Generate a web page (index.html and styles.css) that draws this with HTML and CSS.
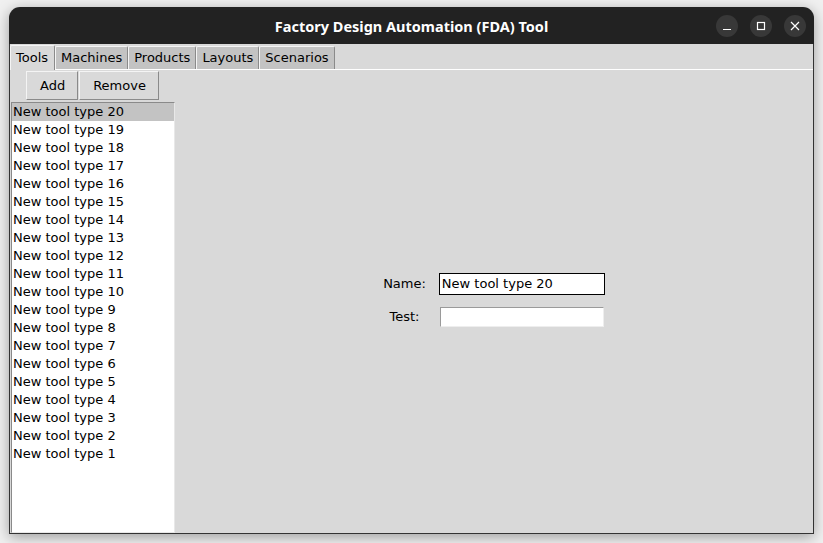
FILE: index.html
```html
<!DOCTYPE html>
<html>
<head>
<meta charset="utf-8">
<link rel="stylesheet" href="styles.css">
</head>
<body>
<div class="window">
  <div class="titlebar">
    <div class="title">Factory Design Automation (FDA) Tool</div>
    <div class="controls">
      <span class="ctl"><svg width="10" height="10" viewBox="0 0 10 10"><line x1="1" y1="8.5" x2="9" y2="8.5" stroke="#fff" stroke-width="1.2"/></svg></span>
      <span class="ctl"><svg width="10" height="10" viewBox="0 0 10 10"><rect x="1.5" y="1.5" width="7" height="7" fill="none" stroke="#fff" stroke-width="1.2"/></svg></span>
      <span class="ctl"><svg width="10" height="10" viewBox="0 0 10 10"><path d="M1 1L9 9M9 1L1 9" stroke="#fff" stroke-width="1.2"/></svg></span>
    </div>
  </div>
  <div class="content">
    <div class="tabs">
      <div class="tab active">Tools</div>
      <div class="tab">Machines</div>
      <div class="tab">Products</div>
      <div class="tab">Layouts</div>
      <div class="tab">Scenarios</div>
    </div>
    <div class="page">
      <div class="left">
        <div class="buttons">
          <button class="btn">Add</button>
          <button class="btn">Remove</button>
        </div>
        <div class="list">
          <div class="row selected">New tool type 20</div>
          <div class="row">New tool type 19</div>
          <div class="row">New tool type 18</div>
          <div class="row">New tool type 17</div>
          <div class="row">New tool type 16</div>
          <div class="row">New tool type 15</div>
          <div class="row">New tool type 14</div>
          <div class="row">New tool type 13</div>
          <div class="row">New tool type 12</div>
          <div class="row">New tool type 11</div>
          <div class="row">New tool type 10</div>
          <div class="row">New tool type 9</div>
          <div class="row">New tool type 8</div>
          <div class="row">New tool type 7</div>
          <div class="row">New tool type 6</div>
          <div class="row">New tool type 5</div>
          <div class="row">New tool type 4</div>
          <div class="row">New tool type 3</div>
          <div class="row">New tool type 2</div>
          <div class="row">New tool type 1</div>
        </div>
      </div>
      <div class="detail">
        <div class="form">
          <label class="lbl">Name:</label>
          <div class="entry focus"><span class="entry-inner">New tool type 20</span></div>
          <label class="lbl">Test:</label>
          <div class="entry"><span class="entry-inner"></span></div>
        </div>
      </div>
    </div>
  </div>
</div>
</body>
</html>
```
FILE: styles.css
```css
* { box-sizing: border-box; }
html, body { margin: 0; padding: 0; }
body {
  width: 823px;
  height: 543px;
  background: #f0f0f0;
  overflow: hidden;
  font-family: "DejaVu Sans", sans-serif;
}
.window {
  margin: 7px 0 0 9px;
  width: 805px;
  height: 527px;
  border-radius: 11px 11px 0 0;
  box-shadow: 0 3px 14px rgba(0,0,0,0.35);
  display: flex;
  flex-direction: column;
  overflow: hidden;
  background: #d9d9d9;
}
.titlebar {
  height: 37px;
  background: #222222;
  position: relative;
  display: flex;
  align-items: center;
  justify-content: center;
  flex: none;
}
.title {
  color: #ffffff;
  font-family: "Noto Sans", "DejaVu Sans", sans-serif;
  font-weight: 700;
  font-size: 14.5px;
  padding-top: 1px;
}
.controls {
  position: absolute;
  right: 8px;
  top: 8px;
  display: flex;
  gap: 12px;
}
.ctl {
  width: 22px;
  height: 22px;
  border-radius: 50%;
  background: #383838;
  display: flex;
  align-items: center;
  justify-content: center;
}
.content {
  flex: 1;
  display: flex;
  flex-direction: column;
  border: 1px solid #333333;
  border-top: none;
  min-height: 0;
}
.tabs {
  display: flex;
  align-items: flex-end;
  height: 25px;
  flex: none;
  font-size: 13px;
  color: #000;
}
.tab {
  height: 23px;
  padding: 0 5px 0 5px;
  line-height: 21px;
  background: #c3c3c3;
  border-top: 1px solid #f4f4f4;
  border-left: 1px solid #f4f4f4;
  border-right: 1px solid #8a8a8a;
  border-radius: 2px 2px 0 0;
}
.tab.active {
  height: 25px;
  padding: 0 6px 0 5px;
  background: #d9d9d9;
  line-height: 23px;
  margin-bottom: -1px;
  position: relative;
  z-index: 1;
}
.page {
  flex: 1;
  display: flex;
  border-top: 1px solid #ffffff;
  min-height: 0;
}
.left {
  width: 165px;
  display: flex;
  flex-direction: column;
  padding: 1px 0 0 1px;
}
.buttons {
  display: flex;
  gap: 1px;
  height: 31px;
  padding-left: 15px;
}
.btn {
  font-family: "DejaVu Sans", sans-serif;
  font-size: 13px;
  color: #000;
  background: #d9d9d9;
  border: 1px solid;
  border-color: #f4f4f4 #8a8a8a #8a8a8a #f4f4f4;
  height: 29px;
  padding: 0 12px 0 13px;
  margin: 0;
}
.list {
  flex: 1;
  background: #ffffff;
  border: 1px solid;
  border-color: #8a8a8a #e8e8e8 #e8e8e8 #8a8a8a;
  font-size: 13px;
  color: #000;
}
.row {
  height: 18px;
  line-height: 18px;
  padding-left: 1px;
  white-space: nowrap;
}
.row.selected { background: #c3c3c3; }
.detail {
  flex: 1;
  display: flex;
  align-items: center;
  justify-content: center;
  padding-bottom: 3px;
  padding-right: 4px;
}
.form {
  display: grid;
  grid-template-columns: auto 166px;
  column-gap: 9px;
  row-gap: 11px;
  align-items: center;
  font-size: 13px;
  color: #000;
}
.lbl {
  text-align: center;
  padding: 0 4px;
}
.entry {
  height: 22px;
  border: 1px solid #d9d9d9;
}
.entry.focus { border-color: #000000; }
.entry-inner {
  display: block;
  height: 100%;
  background: #fff;
  border: 1px solid;
  border-color: #9a9a9a #eeeeee #eeeeee #9a9a9a;
  line-height: 18px;
  padding-left: 1px;
  white-space: nowrap;
}
.entry.focus .entry-inner { border-color: #ffffff; }
```
